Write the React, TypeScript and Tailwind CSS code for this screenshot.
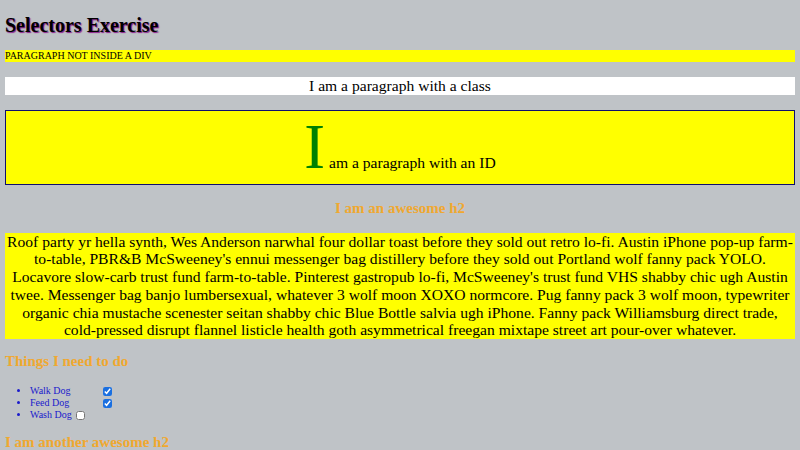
export default function App() {
  return (
    <div className="min-h-[450px] bg-[#bfc3c7] px-[5px] pt-[14px] pb-4 font-['Liberation_Serif',serif] text-black">
      <h1 className="text-[20px] font-bold leading-[23px] [text-shadow:1px_1px_1px_#8b1a8b]">
        Selectors Exercise
      </h1>

      <p className="mt-[13px] bg-[#ffff00] text-[10px] leading-[11.5px]">
        PARAGRAPH NOT INSIDE A DIV
      </p>

      <p className="mt-[15.5px] bg-white text-center text-[15.6px] leading-[18px]">
        I am a paragraph with a class
      </p>

      <p className="mt-[15px] border border-[#10106e] bg-[#ffff00] pb-px text-center text-[15.6px] leading-[normal] first-letter:text-[62.4px] first-letter:text-[#008000]">
        I am a paragraph with an ID
      </p>

      <h2 className="mt-[15px] text-center text-[15px] font-bold leading-[17.25px] text-[#f0a830]">
        I am an awesome h2
      </h2>

      <p className="mt-[15.5px] bg-[#ffff00] text-center text-[15.6px] leading-[17.7px]">
        Roof party yr hella synth, Wes Anderson narwhal four dollar toast before they sold out retro lo-fi.
        Austin iPhone pop-up farm-to-table, PBR&amp;B McSweeney's ennui messenger bag distillery before they
        sold out Portland wolf fanny pack YOLO. Locavore slow-carb trust fund farm-to-table. Pinterest
        gastropub lo-fi, McSweeney's trust fund VHS shabby chic ugh Austin twee. Messenger bag banjo
        lumbersexual, whatever 3 wolf moon XOXO normcore. Pug fanny pack 3 wolf moon, typewriter organic chia
        mustache scenester seitan shabby chic Blue Bottle salvia ugh iPhone. Fanny pack Williamsburg direct
        trade, cold-pressed disrupt flannel listicle health goth asymmetrical freegan mixtape street art
        pour-over whatever.
      </p>

      <h3 className="mt-[14px] text-[15px] font-bold leading-[17.25px] text-[#f0a830]">
        Things I need to do
      </h3>

      <ul className="mt-[15px] list-disc pl-[25px] text-[10px] leading-[12px] text-[#1a1acc]">
        <li>
          <span className="inline-block w-[73px]">Walk Dog</span>
          <input type="checkbox" defaultChecked className="h-[9px] w-[9px] align-middle accent-[#1a6fe0]" />
        </li>
        <li>
          <span className="inline-block w-[73px]">Feed Dog</span>
          <input type="checkbox" defaultChecked className="h-[9px] w-[9px] align-middle accent-[#1a6fe0]" />
        </li>
        <li>
          <span>Wash Dog</span>
          <input type="checkbox" className="ml-[4px] h-[9px] w-[9px] align-middle" />
        </li>
      </ul>

      <h2 className="mt-[13px] text-[15px] font-bold leading-[17.25px] text-[#f0a830]">
        I am another awesome h2
      </h2>
    </div>
  );
}
